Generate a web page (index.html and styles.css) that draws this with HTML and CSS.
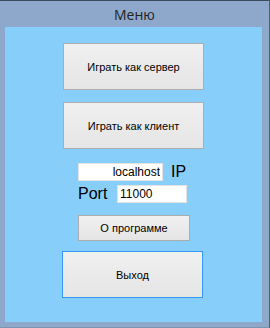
FILE: index.html
```html
<!DOCTYPE html>
<html lang="ru">
<head>
    <meta charset="UTF-8">
    <meta name="viewport" content="width=device-width, initial-scale=1.0">
    <title>Меню</title>
    <link rel="stylesheet" href="styles.css">
</head>
<body>
    <div class="window">
        <div class="window-title">Меню</div>
        <div class="client">
            <button class="btn btn-big">Играть как сервер</button>
            <button class="btn btn-big">Играть как клиент</button>

            <div class="ip-row">
                <input class="field field-ip" type="text" value="localhost">
                <span class="label">IP</span>
            </div>
            <div class="port-row">
                <span class="label">Port</span>
                <input class="field field-port" type="text" value="11000">
            </div>

            <button class="btn btn-about">О программе</button>
            <button class="btn btn-big btn-exit">Выход</button>
        </div>
    </div>
</body>
</html>
```

FILE: styles.css
```css
html, body {
    margin: 0;
    padding: 0;
}

body {
    font-family: 'Liberation Sans', Arial, sans-serif;
    background-color: #8ea8cc;
}

.window {
    width: 270px;
    height: 328px;
    box-sizing: border-box;
    background-color: #8ea8cc;
    border-top: 1px solid #3c4a5c;
    border-right: 1px solid #4f5f78;
    border-bottom: 1px solid #7b93b5;
    display: flex;
    flex-direction: column;
}

.window-title {
    height: 26px;
    line-height: 28px;
    text-align: center;
    font-family: 'Open Sans', 'Liberation Sans', sans-serif;
    font-size: 14px;
    color: #222;
}

.client {
    margin: 0 7px 5px 5px;
    flex: 1;
    background-color: #87cefa;
    display: flex;
    flex-direction: column;
    align-items: flex-start;
    padding: 16px 0 0 58px;
}

.btn {
    font-family: 'Liberation Sans', Arial, sans-serif;
    font-size: 11px;
    color: #000;
    background: linear-gradient(#f0f0f0, #e5e5e5);
    border: 1px solid #adadad;
    padding: 0;
    margin: 0;
}

.btn-big {
    width: 141px;
    height: 47px;
}

.btn-big + .btn-big {
    margin-top: 12px;
}

.ip-row {
    margin: 14px 0 0 15px;
    display: flex;
    align-items: center;
    height: 18px;
}

.port-row {
    margin: 4px 0 0 15px;
    display: flex;
    align-items: center;
    height: 18px;
}

.label {
    font-size: 16px;
    color: #000;
}

.ip-row .label {
    margin-left: 8px;
}

.port-row .label {
    width: 39px;
}

.field {
    box-sizing: border-box;
    height: 18px;
    border: 1px solid #e3e3e3;
    background: #fff;
    font-family: 'Liberation Sans', Arial, sans-serif;
    font-size: 12px;
    color: #000;
    padding: 0 2px;
    margin: 0;
    outline: none;
}

.field-ip {
    width: 85px;
    text-align: right;
}

.field-port {
    width: 70px;
}

.btn-about {
    margin: 12px 0 0 15px;
    width: 112px;
    height: 26px;
}

.btn-exit {
    margin: 10px 0 0 -1px;
    border-color: #3399ff;
}
```
